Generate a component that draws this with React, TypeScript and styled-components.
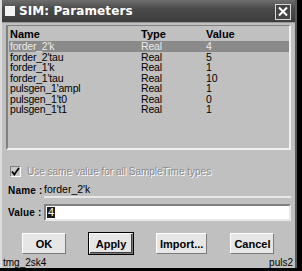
import styled, { createGlobalStyle } from "styled-components"

const GlobalStyle = createGlobalStyle`
  html, body {
    margin: 0;
    padding: 0;
    background: #000;
  }
  body {
    font-family: "Liberation Sans", Arial, sans-serif;
    font-size: 10px;
  }
`

const rows = [
  { name: "forder_2'k", type: "Real", value: "4" },
  { name: "forder_2'tau", type: "Real", value: "5" },
  { name: "forder_1'k", type: "Real", value: "1" },
  { name: "forder_1'tau", type: "Real", value: "10" },
  { name: "pulsgen_1'ampl", type: "Real", value: "1" },
  { name: "pulsgen_1't0", type: "Real", value: "0" },
  { name: "pulsgen_1't1", type: "Real", value: "1" },
]

const App = () => {
  return (
    <>
      <GlobalStyle />
      <Window>
        <TitleBar>
          <TitleIcon />
          <Title>SIM: Parameters</Title>
          <CloseButton>
            <svg width="12" height="11" viewBox="0 0 12 11">
              <path d="M2 1.5 L10 9.5 M10 1.5 L2 9.5" stroke="#fff" strokeWidth="2" />
            </svg>
          </CloseButton>
        </TitleBar>
        <Body>
          <ListBox>
            <HeaderRow>
              <NameCol>Name</NameCol>
              <TypeCol>Type</TypeCol>
              <ValueCol>Value</ValueCol>
            </HeaderRow>
            {rows.map((row, index) => (
              <Row key={row.name} selected={index === 0}>
                <NameCol>{row.name}</NameCol>
                <TypeCol>{row.type}</TypeCol>
                <ValueCol>{row.value}</ValueCol>
              </Row>
            ))}
          </ListBox>
          <CheckRow>
            <CheckBox>
              <svg width="9" height="9" viewBox="0 0 9 9">
                <path d="M1 4.5 L3.3 7.5 L8 1" stroke="#000" strokeWidth="1.8" fill="none" />
              </svg>
            </CheckBox>
            <DisabledLabel>Use same value for all SampleTime types</DisabledLabel>
          </CheckRow>
          <FieldRow>
            <FieldLabel>Name :</FieldLabel>
            <NameField>forder_2'k</NameField>
          </FieldRow>
          <ValueRow>
            <FieldLabel>Value :</FieldLabel>
            <ValueInput>
              <Selected>4</Selected>
            </ValueInput>
          </ValueRow>
          <ButtonRow>
            <Button>OK</Button>
            <Button isDefault>Apply</Button>
            <Button>Import...</Button>
            <Button>Cancel</Button>
          </ButtonRow>
          <StatusRow>
            <span>tmg_2sk4</span>
            <span>puls2</span>
          </StatusRow>
        </Body>
      </Window>
    </>
  )
}

const Window = styled.div`
  width: 297px;
  height: 268px;
  box-sizing: border-box;
  background: #c0c0c0;
  border-left: 2px solid #dcdcdc;
  border-right: 2px solid #5a5a5a;
  display: flex;
  flex-direction: column;
  overflow: hidden;
`

const TitleBar = styled.div`
  height: 22px;
  flex-shrink: 0;
  display: flex;
  align-items: center;
  padding: 0 4px 0 3px;
  background: linear-gradient(to bottom, #6e6e6e 0%, #4a4a4a 40%, #3c3c3c 100%);
  border-bottom: 1px solid #9a9a9a;
`

const TitleIcon = styled.div`
  width: 10px;
  height: 9px;
  background: #f4f4f4;
  border-top: 1px solid #fff;
  margin-right: 4px;
`

const Title = styled.div`
  flex: 1;
  color: #fff;
  font-family: "DejaVu Sans", "Liberation Sans", sans-serif;
  font-weight: bold;
  font-size: 12px;
  letter-spacing: 0.1px;
`

const CloseButton = styled.div`
  width: 14px;
  height: 14px;
  border: 1px solid #d8d8d8;
  background: #444;
  display: flex;
  align-items: center;
  justify-content: center;
  margin-top: 1px;
`

const Body = styled.div`
  flex: 1;
  display: flex;
  flex-direction: column;
  padding: 2px 4px 0 4px;
`

const ListBox = styled.div`
  height: 125px;
  flex-shrink: 0;
  box-sizing: border-box;
  border-top: 1px solid #808080;
  border-left: 2px solid #808080;
  border-right: 2px solid #f0f0f0;
  border-bottom: 2px solid #f0f0f0;
  padding: 1px 0 0 1px;
  display: flex;
  flex-direction: column;
`

const HeaderRow = styled.div`
  display: flex;
  height: 13px;
  align-items: center;
  font-weight: bold;
  font-size: 11px;
  color: #000;
  margin-bottom: 1px;
`

const Row = styled.div<{ selected?: boolean }>`
  display: flex;
  height: 10.5px;
  align-items: center;
  font-size: 10.5px;
  letter-spacing: -0.2px;
  background: ${(p) => (p.selected ? "#8a8a8a" : "transparent")};
  color: ${(p) => (p.selected ? "#eaeaea" : "#000")};
`

const NameCol = styled.div`
  width: 131px;
  padding-left: 1px;
`

const TypeCol = styled.div`
  width: 60px;
`

const ValueCol = styled.div`
  flex: 1;
  padding-left: 5px;
`

const CheckRow = styled.div`
  display: flex;
  align-items: center;
  margin: 15px 0 0 4px;
  height: 12px;
  flex-shrink: 0;
`

const CheckBox = styled.div`
  width: 9px;
  height: 9px;
  background: #c8c8c8;
  border-top: 1px solid #808080;
  border-left: 1px solid #808080;
  border-right: 1px solid #fff;
  border-bottom: 1px solid #fff;
  display: flex;
  align-items: center;
  justify-content: center;
  margin-right: 6px;
`

const DisabledLabel = styled.span`
  color: #8a8a8a;
  text-shadow: 1px 1px 0 #fff;
  font-size: 10px;
  white-space: nowrap;
`

const FieldRow = styled.div`
  display: flex;
  align-items: center;
  height: 16px;
  margin-top: 5px;
  flex-shrink: 0;
`

const ValueRow = styled(FieldRow)`
  height: 17px;
  margin-top: 6px;
`

const FieldLabel = styled.div`
  width: 36px;
  flex-shrink: 0;
  font-weight: bold;
  font-size: 10px;
  letter-spacing: 0.2px;
  color: #000;
  padding-left: 2px;
  white-space: nowrap;
`

const NameField = styled.div`
  flex: 1;
  height: 14px;
  line-height: 14px;
  font-size: 10.5px;
  padding-left: 0;
  border-bottom: 2px solid #e8e8e8;
`

const ValueInput = styled.div`
  flex: 1;
  height: 13px;
  background: #fff;
  border-top: 2px solid #808080;
  border-left: 2px solid #808080;
  border-right: 2px solid #e8e8e8;
  border-bottom: 2px solid #e8e8e8;
  display: flex;
  align-items: center;
  padding-left: 1px;
`

const Selected = styled.span`
  background: #1a1a1a;
  color: #fff;
  font-size: 11px;
  line-height: 11px;
  padding: 0 1px;
`

const ButtonRow = styled.div`
  display: flex;
  gap: 23px;
  padding-left: 16px;
  margin-top: 12px;
  flex-shrink: 0;
`

const Button = styled.div<{ isDefault?: boolean }>`
  min-width: 44px;
  height: 21px;
  box-sizing: border-box;
  padding: 0 3px;
  display: flex;
  align-items: center;
  justify-content: center;
  font-weight: bold;
  font-size: 11px;
  color: #000;
  background: #e6e6e6;
  border-top: 1px solid #fff;
  border-left: 1px solid #fff;
  border-right: 1px solid #7a7a7a;
  border-bottom: 1px solid #7a7a7a;
  outline: ${(p) => (p.isDefault ? "1px solid #000" : "none")};
  box-shadow: ${(p) => (p.isDefault ? "inset -1px -1px 0 #404040" : "none")};
`

const StatusRow = styled.div`
  display: flex;
  justify-content: space-between;
  align-items: center;
  height: 12px;
  margin-top: 2px;
  font-size: 10px;
  color: #000;
  margin-left: -3px;
  margin-right: -2px;
  flex-shrink: 0;
`

export default App
